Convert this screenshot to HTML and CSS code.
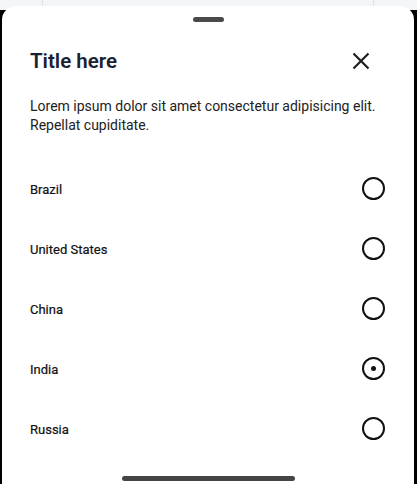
FILE: index.html
```html
<!DOCTYPE html>
<html>
<head>
<meta charset="utf-8">
<link rel="stylesheet" href="styles.css">
</head>
<body>
<div class="behind"><div class="behind-card"></div></div>
<div class="stage">
  <div class="sheet">
    <div class="handle"></div>
    <div class="header">
      <h1 class="title">Title here</h1>
      <button class="close" aria-label="Close">
        <svg width="18" height="18" viewBox="0 0 18 18"><path d="M1.5 1.5L16.5 16.5M16.5 1.5L1.5 16.5" stroke="#1f1f1f" stroke-width="2.2" fill="none"/></svg>
      </button>
    </div>
    <p class="desc">Lorem ipsum dolor sit amet consectetur adipisicing elit. Repellat cupiditate.</p>
    <ul class="list">
      <li class="row"><span class="label">Brazil</span><span class="radio"></span></li>
      <li class="row"><span class="label">United States</span><span class="radio"></span></li>
      <li class="row"><span class="label">China</span><span class="radio"></span></li>
      <li class="row"><span class="label">India</span><span class="radio checked"></span></li>
      <li class="row"><span class="label">Russia</span><span class="radio"></span></li>
    </ul>
    <div class="home-bar"></div>
  </div>
</div>
</body>
</html>
```
FILE: styles.css
```css
html, body {
  margin: 0;
  padding: 0;
}
body {
  width: 417px;
  height: 484px;
  overflow: hidden;
  background: #f4f5f7;
  font-family: Roboto, "Liberation Sans", sans-serif;
}
.behind {
  height: 6px;
  padding: 0 43px 0 42px;
}
.behind-card {
  height: 100%;
  border-left: 1px solid #dde2e8;
  border-right: 1px solid #dde2e8;
}
.stage {
  height: 478px;
  background: linear-gradient(#f4f5f7 0 4px, #000 4px);
  padding: 0 3px 0 2px;
}
.sheet {
  height: 100%;
  background: #fff;
  border-radius: 14px 14px 0 0;
  display: flex;
  flex-direction: column;
}
.handle {
  width: 31px;
  height: 5px;
  border-radius: 3px;
  background: #4a4a4a;
  margin: 11px auto 0;
}
.header {
  display: flex;
  align-items: center;
  justify-content: space-between;
  margin-top: 25px;
  padding: 0 44px 0 28px;
  height: 28px;
}
.title {
  margin: 0;
  font-size: 20.5px;
  line-height: 28px;
  font-weight: 600;
  color: #1a2232;
}
.close {
  border: 0;
  background: none;
  padding: 0;
  width: 18px;
  height: 18px;
  display: block;
}
.close svg {
  display: block;
}
.desc {
  margin: 22px 0 0;
  padding: 0 29px 0 28px;
  font-size: 14px;
  line-height: 19px;
  color: #222;
}
.list {
  list-style: none;
  margin: 23px 0 0;
  padding: 0 29px 0 28px;
}
.row {
  height: 60px;
  display: flex;
  align-items: center;
  justify-content: space-between;
}
.label {
  font-size: 13px;
  font-weight: 400;
  color: #111;
  padding-top: 3px;
  -webkit-text-stroke: 0.2px #111;
}
.radio {
  width: 23px;
  height: 23px;
  box-sizing: border-box;
  border: 2px solid #111;
  border-radius: 50%;
  display: flex;
  align-items: center;
  justify-content: center;
}
.radio.checked::after {
  content: "";
  width: 5px;
  height: 5px;
  border-radius: 50%;
  background: #111;
}
.home-bar {
  width: 173px;
  height: 5px;
  border-radius: 3px;
  background: #444;
  margin: 18px auto 0;
}
```
